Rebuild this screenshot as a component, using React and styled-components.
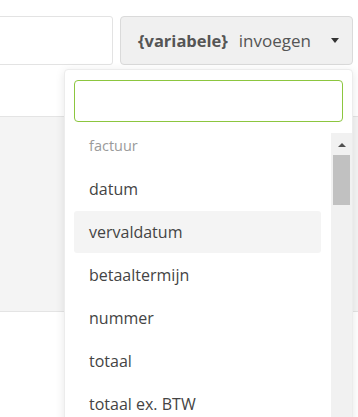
import React from "react";
import styled, { createGlobalStyle } from "styled-components";

const GlobalStyle = createGlobalStyle`
  body {
    margin: 0;
    background: #fff;
    font-family: "Open Sans", Lato, sans-serif;
    color: #444;
  }
`;

const Page = styled.div`
  position: relative;
  width: 358px;
  height: 417px;
  overflow: hidden;
`;

const Toolbar = styled.div`
  display: flex;
  gap: 7px;
  padding: 16px 5px 0 0;
  margin-left: -10px;
`;

const TextInput = styled.div`
  flex: 1;
  height: 49px;
  box-sizing: border-box;
  border: 1px solid #e3e3e3;
  border-radius: 3px;
  background: #fff;
`;

const InsertButton = styled.div`
  display: flex;
  align-items: center;
  box-sizing: border-box;
  width: 233px;
  height: 49px;
  padding: 0 13px 0 17px;
  background: #f0f0f0;
  border: 1px solid #dadada;
  border-radius: 4px;
  color: #555;
  font-size: 17px;
`;

const Bold = styled.b`
  font-weight: 700;
  font-size: 16.5px;
  margin-right: 11px;
`;

const Caret = styled.span`
  margin-left: auto;
  width: 0;
  height: 0;
  border-left: 4.5px solid transparent;
  border-right: 4.5px solid transparent;
  border-top: 5px solid #333;
`;

const Gap = styled.div`
  height: 51px;
`;

const Panel = styled.div`
  height: 194px;
  background: #f4f4f4;
  border-top: 1px solid #e4e4e4;
  border-bottom: 1px solid #e4e4e4;
`;

const Dropdown = styled.div`
  position: absolute;
  left: 64px;
  top: 69px;
  width: 289px;
  height: 360px;
  background: #fff;
  border: 1px solid #ececec;
  border-radius: 4px;
  box-sizing: border-box;
  box-shadow: 0 2px 10px rgba(0, 0, 0, 0.1);
  padding-top: 10px;
`;

const Search = styled.div`
  margin: 0 9px;
  height: 42px;
  box-sizing: border-box;
  border: 1px solid #8cc63f;
  border-radius: 4px;
`;

const ListArea = styled.div`
  display: flex;
  margin-top: 11px;
`;

const List = styled.div`
  flex: 1;
  padding: 0 10px 0 9px;
`;

const GroupLabel = styled.div`
  height: 35px;
  box-sizing: border-box;
  padding: 3px 0 0 15px;
  font-size: 14.5px;
  color: #9a9a9a;
`;

const Item = styled.div`
  height: 42px;
  margin-bottom: 1px;
  display: flex;
  align-items: center;
  padding-left: 15px;
  font-size: 16px;
  color: #444;
  border-radius: 3px;
  background: ${(p) => (p.active ? "#f4f4f4" : "transparent")};
`;

const Scrollbar = styled.div`
  width: 21px;
  height: 300px;
  background: #f1f1f1;
  display: flex;
  flex-direction: column;
  align-items: center;
`;

const UpArrow = styled.div`
  margin-top: 10px;
  width: 0;
  height: 0;
  border-left: 4.5px solid transparent;
  border-right: 4.5px solid transparent;
  border-bottom: 4px solid #505050;
`;

const Thumb = styled.div`
  margin-top: 8px;
  width: 17px;
  height: 50px;
  background: #c1c1c1;
`;

const items = ["datum", "vervaldatum", "betaaltermijn", "nummer", "totaal", "totaal ex. BTW"];

export default function App() {
  return (
    <Page>
      <GlobalStyle />
      <Toolbar>
        <TextInput />
        <InsertButton>
          <Bold>{"{variabele}"}</Bold>
          invoegen
          <Caret />
        </InsertButton>
      </Toolbar>
      <Gap />
      <Panel />
      <Dropdown>
        <Search />
        <ListArea>
          <List>
            <GroupLabel>factuur</GroupLabel>
            {items.map((it) => (
              <Item key={it} active={it === "vervaldatum"}>
                {it}
              </Item>
            ))}
          </List>
          <Scrollbar>
            <UpArrow />
            <Thumb />
          </Scrollbar>
        </ListArea>
      </Dropdown>
    </Page>
  );
}
